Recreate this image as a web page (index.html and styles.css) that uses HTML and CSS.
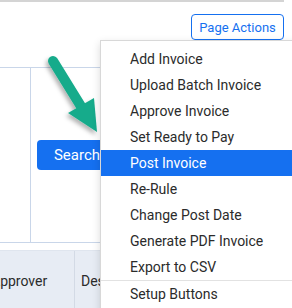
FILE: index.html
```html
<!doctype html>
<html lang="en">
  <head>
    <meta charset="UTF-8" />
    <meta name="viewport" content="width=device-width, initial-scale=1.0" />
    <title>Invoices</title>
    <link rel="stylesheet" href="styles.css">
  </head>
  <body>
    <div class="topbar"></div>

    <div class="toolbar">
      <div class="actions">
        <button class="btn-outline" type="button">Page Actions</button>
        <!-- Page actions dropdown (open) -->
        <ul class="menu">
          <li>Add Invoice</li>
          <li>Upload Batch Invoice</li>
          <li>Approve Invoice</li>
          <li>Set Ready to Pay</li>
          <li class="active">Post Invoice</li>
          <li>Re-Rule</li>
          <li>Change Post Date</li>
          <li>Generate PDF Invoice</li>
          <li>Export to CSV</li>
          <li class="divider"></li>
          <li>Setup Buttons</li>
        </ul>
      </div>
    </div>

    <div class="filter">
      <div class="filter-side"></div>
      <div class="filter-main">
        <button class="btn-primary" type="button">Search</button>
      </div>
    </div>

    <div class="grid-head">
      <div class="col col-approver">Approver</div>
      <div class="col">Description</div>
    </div>

    <!-- Callout arrow -->
    <svg class="pointer" width="120" height="150" viewBox="0 0 120 150">
      <defs>
        <filter id="shade" x="-30%" y="-30%" width="160%" height="160%">
          <feDropShadow dx="-2" dy="3" stdDeviation="2" flood-color="#000" flood-opacity="0.3" />
        </filter>
      </defs>
      <g filter="url(#shade)" fill="#17ab8b">
        <line x1="53" y1="61" x2="82" y2="108" stroke="#17ab8b" stroke-width="10" stroke-linecap="round" />
        <polygon points="68,113 94,98 97,132" />
      </g>
    </svg>
  </body>
</html>
```

FILE: styles.css
```css
body {
  font-family: Roboto, "Liberation Sans", sans-serif;
  font-size: 14px;
  color: #2b2b2b;
  margin: 0;
  background: #fff;
  overflow: hidden;
  position: relative;
}
.topbar {
  width: 284px;
  height: 2px;
  background: #d4d4d4;
}
/* Toolbar */
.toolbar {
  display: flex;
  justify-content: flex-end;
  padding: 12px 8px 0 0;
}
.actions {
  position: relative;
}
.btn-outline {
  width: 93px;
  height: 26px;
  padding: 0;
  font-family: inherit;
  font-size: 13px;
  color: #1570f0;
  background: #fff;
  border: 1px solid #1570f0;
  border-radius: 4px;
}
.menu {
  position: absolute;
  top: 100%;
  left: -91px;
  width: 220px;
  margin: 0;
  padding: 5px 0;
  list-style: none;
  background: #fff;
  border: 1px solid #d8d8d8;
  box-shadow: 0 3px 8px rgba(0, 0, 0, 0.15);
  z-index: 2;
}
.menu li {
  height: 26px;
  line-height: 26px;
  padding-left: 29px;
  white-space: nowrap;
}
.menu li.active {
  background: #1570f0;
  color: #fff;
}
.menu li.divider {
  height: 1px;
  padding: 0;
  background: #e2e2e2;
}
/* Filter panel */
.filter {
  display: flex;
  height: 174px;
  margin-top: 27px;
  border-top: 1px solid #c9d6e9;
  border-bottom: 1px solid #c9d6e9;
}
.filter-side {
  width: 30px;
  border-right: 1px solid #c9d6e9;
}
.filter-main {
  flex: 1;
  padding: 72px 0 0 6px;
}
.btn-primary {
  width: 80px;
  height: 30px;
  padding: 0;
  font-family: inherit;
  font-size: 15px;
  color: #fff;
  background: #1570f0;
  border: none;
  border-radius: 4px;
}
/* Grid header */
.grid-head {
  display: flex;
  height: 60px;
  margin: 7px 0 0 -15px;
  background: #e7ecf4;
  border-top: 1px solid #dfe5ee;
}
.col {
  display: flex;
  align-items: center;
  padding-left: 6px;
  white-space: nowrap;
}
.col-approver {
  width: 83px;
  border-right: 1px solid #d3dae5;
}
.pointer {
  position: absolute;
  top: 0;
  left: 0;
  pointer-events: none;
  z-index: 1;
}
```
